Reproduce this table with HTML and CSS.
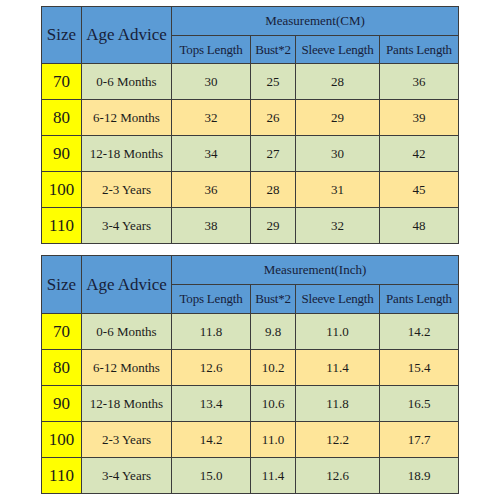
FILE: index.html
```html
<!DOCTYPE html>
<html>
<head>
<meta charset="utf-8">
<link rel="stylesheet" href="styles.css">
</head>
<body>
<div class="page">
  <table class="chart">
    <colgroup><col class="c1"><col class="c2"><col class="c3"><col class="c4"><col class="c5"><col class="c6"></colgroup>
    <tr class="h1"><th rowspan="2" class="big">Size</th><th rowspan="2" class="big">Age Advice</th><th colspan="4" class="meas">Measurement(CM)</th></tr>
    <tr class="h2"><th>Tops Length</th><th>Bust*2</th><th>Sleeve Length</th><th>Pants Length</th></tr>
    <tr class="g"><td class="sz">70</td><td>0-6 Months</td><td>30</td><td>25</td><td>28</td><td>36</td></tr>
    <tr class="o"><td class="sz">80</td><td>6-12 Months</td><td>32</td><td>26</td><td>29</td><td>39</td></tr>
    <tr class="g"><td class="sz">90</td><td>12-18 Months</td><td>34</td><td>27</td><td>30</td><td>42</td></tr>
    <tr class="o"><td class="sz">100</td><td>2-3 Years</td><td>36</td><td>28</td><td>31</td><td>45</td></tr>
    <tr class="g"><td class="sz">110</td><td>3-4 Years</td><td>38</td><td>29</td><td>32</td><td>48</td></tr>
  </table>
  <table class="chart">
    <colgroup><col class="c1"><col class="c2"><col class="c3"><col class="c4"><col class="c5"><col class="c6"></colgroup>
    <tr class="h1"><th rowspan="2" class="big">Size</th><th rowspan="2" class="big">Age Advice</th><th colspan="4" class="meas">Measurement(Inch)</th></tr>
    <tr class="h2 h2b"><th>Tops Length</th><th>Bust*2</th><th>Sleeve Length</th><th>Pants Length</th></tr>
    <tr class="g"><td class="sz">70</td><td>0-6 Months</td><td>11.8</td><td>9.8</td><td>11.0</td><td>14.2</td></tr>
    <tr class="o"><td class="sz">80</td><td>6-12 Months</td><td>12.6</td><td>10.2</td><td>11.4</td><td>15.4</td></tr>
    <tr class="g"><td class="sz">90</td><td>12-18 Months</td><td>13.4</td><td>10.6</td><td>11.8</td><td>16.5</td></tr>
    <tr class="o"><td class="sz">100</td><td>2-3 Years</td><td>14.2</td><td>11.0</td><td>12.2</td><td>17.7</td></tr>
    <tr class="g"><td class="sz">110</td><td>3-4 Years</td><td>15.0</td><td>11.4</td><td>12.6</td><td>18.9</td></tr>
  </table>
</div>
</body>
</html>
```
FILE: styles.css
```css
html, body { margin: 0; padding: 0; background: #ffffff; }
.page {
  padding: 6px 0 0 41px;
  display: flex;
  flex-direction: column;
  gap: 11px;
}
.chart {
  border-collapse: collapse;
  table-layout: fixed;
  width: 417px;
}
.c1 { width: 40px; }
.c2 { width: 90px; }
.c3 { width: 79px; }
.c4 { width: 45px; }
.c5 { width: 84px; }
.c6 { width: 79px; }
.chart th, .chart td {
  font-family: "Liberation Serif", "Times New Roman", serif;
  color: #1a1a1a;
  border: 1px solid #3c3c3c;
  padding: 0;
  text-align: center;
  vertical-align: middle;
  font-weight: normal;
  white-space: nowrap;
  overflow: hidden;
}
.chart th { background: #5b9bd5; color: #17213a; }
.h1 th { height: 28px; }
.h2 th { height: 27px; font-size: 13px; letter-spacing: -0.2px; }
.h2b th { height: 28px; }
.big { font-size: 17px; }
.chart th.meas { font-size: 13px; }
.chart td { height: 35px; font-size: 13px; }
.g td { background: #d8e4bc; }
.o td { background: #fee599; }
.chart td.sz { background: #ffff00; font-size: 17px; }
```
